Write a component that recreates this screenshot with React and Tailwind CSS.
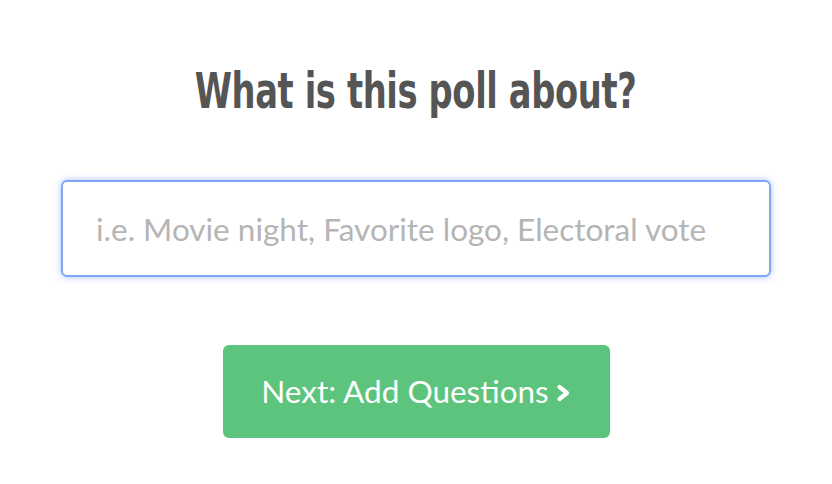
export default function App() {
  return (
    <div className="min-h-screen bg-white flex flex-col items-center pt-[59px]" style={{ fontFamily: 'Lato, "Open Sans", sans-serif' }}>
      <h1
        className="text-[#555555] font-bold text-[50px] leading-[64px] font-stretch-condensed tracking-[-0.5px] scale-x-[0.75] whitespace-nowrap"
        style={{ fontFamily: '"DejaVu Sans Condensed", "DejaVu Sans", sans-serif' }}
      >
        What is this poll about?
      </h1>
      <input
        type="text"
        placeholder="i.e. Movie night, Favorite logo, Electoral vote"
        className="mt-[57px] w-[710px] h-[97px] px-[33px] rounded-[6px] border-2 border-[#7fa6f4] bg-white text-[31.5px] text-[#333] placeholder:text-[#b5b5b5] outline-none shadow-[0_0_7px_rgba(102,150,245,0.55)]"
      />
      <button className="mt-[68px] w-[387px] h-[93px] rounded-[6px] bg-[#5cc47c] text-white text-[31.5px] flex items-center justify-center gap-[6px]">
        <span>Next: Add Questions</span>
        <svg width="16" height="18" viewBox="0 0 16 18" className="mt-[3px] shrink-0">
          <path d="M4.5 3 L12 9 L4.5 15" fill="none" stroke="white" strokeWidth="4.2" strokeLinecap="round" strokeLinejoin="round" />
        </svg>
      </button>
    </div>
  );
}
